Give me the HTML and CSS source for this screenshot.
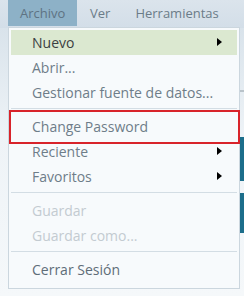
FILE: index.html
```html
<!DOCTYPE html>
<html>
<head>
<meta charset="utf-8">
<link rel="stylesheet" href="styles.css">
</head>
<body>
<div class="page">
  <div class="menubar">
    <div class="tab active">Archivo</div>
    <div class="tab">Ver</div>
    <div class="tab">Herramientas</div>
  </div>
  <div class="content">
    <div class="edge">
      <div class="blk b1"></div>
      <div class="blk b2"></div>
      <div class="blk b3"></div>
    </div>
  </div>
  <div class="dropdown">
    <div class="item hover">Nuevo<span class="arrow"></span></div>
    <div class="item">Abrir...</div>
    <div class="item">Gestionar fuente de datos...</div>
    <div class="sep"></div>
    <div class="item cp">Change Password</div>
    <div class="item">Reciente<span class="arrow"></span></div>
    <div class="item">Favoritos<span class="arrow"></span></div>
    <div class="sep"></div>
    <div class="item disabled">Guardar</div>
    <div class="item disabled">Guardar como...</div>
    <div class="sep"></div>
    <div class="item logout">Cerrar Sesión</div>
    <div class="highlight"></div>
  </div>
</div>
</body>
</html>
```
FILE: styles.css
```css
* { box-sizing: border-box; }
html, body { margin: 0; padding: 0; }
body {
  width: 244px;
  height: 296px;
  overflow: hidden;
  font-family: "Open Sans", "DejaVu Sans", sans-serif;
  background: #f2f6f9;
}
.page {
  position: relative;
  width: 244px;
  height: 296px;
  display: flex;
  flex-direction: column;
}
.menubar {
  height: 28px;
  display: flex;
  padding-left: 8px;
  background: linear-gradient(#dbe4ec, #d3dee8);
  flex-shrink: 0;
}
.tab {
  height: 26px;
  line-height: 27px;
  font-size: 13px;
  color: #6b7c88;
  padding: 0 12px 0 13px;
}
.tab.active {
  background: #8db1c7;
  color: #5e7383;
  width: 69px;
  padding-left: 12px;
}
.content {
  flex: 1;
  background: linear-gradient(#d9e3eb, #eef3f7 40%, #f5f8fa);
  display: flex;
  justify-content: flex-end;
}
.edge {
  width: 4px;
  display: flex;
  flex-direction: column;
  padding-top: 62px;
}
.blk { background: #1c6e8b; }
.b1 { height: 2px; background: #b9c3ca; margin-bottom: 45px; }
.b2 { height: 44px; margin-bottom: 12px; }
.b3 { height: 40px; }
.dropdown {
  position: absolute;
  left: 8px;
  top: 27px;
  width: 232px;
  height: 262px;
  background: #f7fafc;
  border: 1px solid #cbd6de;
  padding: 2px 2px 0 2px;
}
.item {
  position: relative;
  height: 25px;
  line-height: 25px;
  padding-left: 21px;
  font-size: 14px;
  color: #6e7d89;
  white-space: nowrap;
}
.item.hover {
  background: #dbe8d0;
  color: #3b3f42;
}
.item.cp { margin-top: 5px; }
.item.disabled { color: #c3cbd1; }
.item.logout { color: #5e6d78; }
.sep {
  height: 1px;
  background: #d3dde4;
  margin: 3px 0 5px 0;
}
.arrow {
  position: absolute;
  right: 15px;
  top: 8px;
  width: 0;
  height: 0;
  border-top: 4px solid transparent;
  border-bottom: 4px solid transparent;
  border-left: 5px solid #000;
}
.highlight {
  position: absolute;
  left: 0;
  top: 82px;
  width: 231px;
  height: 34px;
  border: 2px solid #d8232a;
}
```
